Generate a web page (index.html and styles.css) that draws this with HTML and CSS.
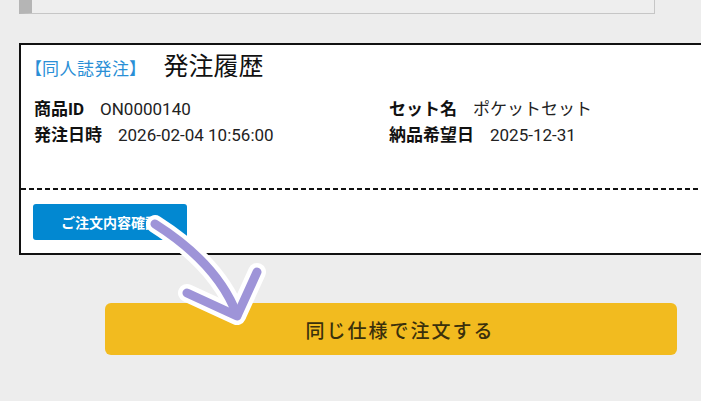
FILE: index.html
```html
<!DOCTYPE html>
<html lang="ja">
<head>
<meta charset="utf-8">
<title>発注履歴</title>
<link rel="stylesheet" href="styles.css">
</head>
<body>
<div class="page">
  <div class="prev-box"></div>

  <section class="card">
    <div class="card-body">
      <div class="card-head">
        <span class="cat">【同人誌発注】</span>
        <h2 class="title">発注履歴</h2>
      </div>
      <dl class="meta">
        <div class="item"><dt>商品ID</dt><dd>ON0000140</dd></div>
        <div class="item"><dt>セット名</dt><dd>ポケットセット</dd></div>
        <div class="item"><dt>発注日時</dt><dd>2026-02-04 10:56:00</dd></div>
        <div class="item"><dt>納品希望日</dt><dd>2025-12-31</dd></div>
      </dl>
    </div>
    <div class="card-foot">
      <button class="btn-detail" type="button">ご注文内容確認</button>
    </div>
  </section>

  <div class="reorder">
    <button class="btn-reorder" type="button">同じ仕様で注文する</button>
  </div>

  <svg class="arrow" width="701" height="401" viewBox="0 0 701 401" aria-hidden="true">
    <g fill="none" stroke="#ffffff" stroke-width="18" stroke-linecap="round" stroke-linejoin="round">
      <path d="M155 224 Q218 264 237 315"/>
      <path d="M187 293 L237 316 L257 272"/>
    </g>
    <g fill="none" stroke="#9e94d8" stroke-width="9" stroke-linecap="round" stroke-linejoin="round">
      <path d="M155 224 Q218 264 237 315"/>
      <path d="M187 293 L237 316 L257 272"/>
    </g>
  </svg>
</div>
</body>
</html>
```

FILE: styles.css
```css
html, body {
  margin: 0;
  padding: 0;
  overflow: hidden;
  background: #ededed;
}

body {
  font-family: Roboto, "Noto Sans CJK JP", sans-serif;
  color: #111;
}

.page {
  position: relative;
  width: 701px;
  height: 401px;
}

.prev-box {
  margin-left: 19px;
  width: 622px;
  height: 13px;
  background: #eeeeee;
  border-left: 13px solid #b5b5b5;
  border-right: 1px solid #c6c6c6;
  border-bottom: 1px solid #c6c6c6;
}

.card {
  margin-top: 29px;
  margin-left: 19px;
  width: 740px;
  background: #fff;
  border: 2px solid #111;
}

.card-body {
  padding: 4px 13px 40px;
}

.card-head {
  display: flex;
  align-items: center;
  height: 36px;
}

.cat {
  font-size: 17px;
  color: #2a8fd6;
  font-feature-settings: "palt";
  letter-spacing: 0.5px;
  margin-left: -1px;
}

.title {
  margin: 0 0 0 25px;
  font-size: 25px;
  font-weight: 400;
  line-height: 36px;
  color: #111;
}

.meta {
  margin: 11px 0 0;
  display: grid;
  grid-template-columns: 355px auto;
  font-size: 17px;
  line-height: 26px;
}

.item {
  display: flex;
}

.item dt {
  font-weight: 700;
}

.item dd {
  margin: 0 0 0 16px;
  color: #222;
}

.card-foot {
  padding: 16px 12px 13px;
  background: repeating-linear-gradient(90deg, #111 0 5px, transparent 5px 8px) top left / 100% 2px no-repeat;
}

.btn-detail {
  display: block;
  width: 154px;
  height: 36px;
  border: 0;
  border-radius: 3px;
  background: #0288d1;
  color: #fff;
  font-family: Roboto, "Noto Sans CJK JP", sans-serif;
  font-size: 14px;
  font-weight: 700;
  padding: 0;
}

.reorder {
  margin-top: 48px;
  margin-left: 105px;
}

.btn-reorder {
  display: block;
  width: 572px;
  height: 52px;
  border: 0;
  border-radius: 6px;
  background: #f2bb1f;
  color: #3a300c;
  font-family: Roboto, "Noto Sans CJK JP", sans-serif;
  font-size: 19px;
  font-weight: 500;
  letter-spacing: 2px;
  padding: 0 0 0 18px;
}

.arrow {
  position: absolute;
  left: 0;
  top: 0;
  pointer-events: none;
}
```
